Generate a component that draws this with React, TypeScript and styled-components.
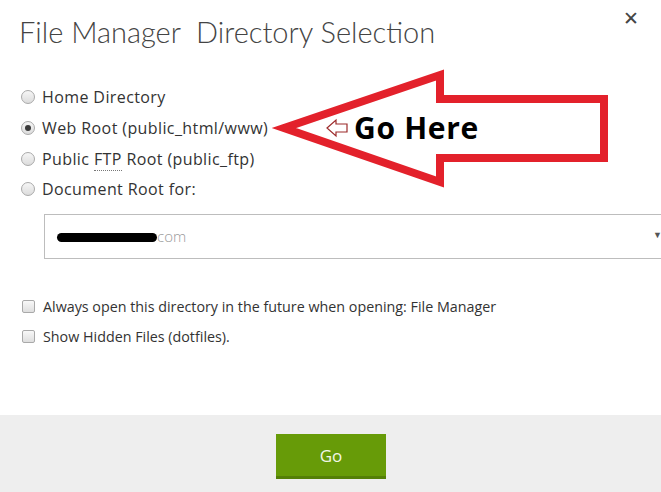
import React from "react";
import styled, { createGlobalStyle } from "styled-components";

const GlobalStyle = createGlobalStyle`
  html, body {
    margin: 0;
    padding: 0;
    background: #ffffff;
  }
  body {
    font-family: "Open Sans", "Noto Sans", sans-serif;
    color: #333333;
  }
`;

const Dialog = styled.div`
  position: relative;
  width: 661px;
  height: 492px;
  display: flex;
  flex-direction: column;
  overflow: hidden;
  background: #ffffff;
`;

const Header = styled.div`
  height: 64px;
  display: flex;
  justify-content: space-between;
  align-items: flex-start;
  padding: 0 22px 0 19px;
  box-sizing: border-box;
`;

const Title = styled.h1`
  margin: 12px 0 0;
  font-family: "Lato", "Open Sans", sans-serif;
  font-size: 29px;
  line-height: 40px;
  font-weight: 300;
  color: #444444;
  white-space: pre;
`;

const Close = styled.button`
  margin-top: 8px;
  border: 0;
  background: none;
  padding: 0;
  font-family: "DejaVu Sans", sans-serif;
  font-size: 19px;
  line-height: 20px;
  color: #444444;
  cursor: pointer;
`;

const Body = styled.div`
  flex: 1;
  padding-left: 21px;
  display: flex;
  flex-direction: column;
`;

const OptionList = styled.div<{ $top: number }>`
  margin-top: ${({ $top }) => $top}px;
  display: flex;
  flex-direction: column;
`;

const Row = styled.label`
  height: 30.7px;
  display: flex;
  align-items: center;
  gap: 7px;
  font-size: 16px;
  letter-spacing: 0.4px;
  color: #333333;
  white-space: nowrap;
`;

const SmallRow = styled(Row)`
  font-size: 14.3px;
  letter-spacing: 0;
  gap: 8px;
`;

const Radio = styled.span<{ $checked?: boolean }>`
  width: 14px;
  height: 14px;
  border-radius: 50%;
  box-sizing: border-box;
  border: 1px solid #a9a9a9;
  background: linear-gradient(#f6f6f6, #dcdcdc);
  display: inline-flex;
  align-items: center;
  justify-content: center;
  flex: none;

  &::after {
    content: "";
    width: 6px;
    height: 6px;
    border-radius: 50%;
    background: #3a3a3a;
    display: ${({ $checked }) => ($checked ? "block" : "none")};
  }
`;

const Box = styled.span`
  width: 13px;
  height: 13px;
  margin-left: 1px;
  border-radius: 2px;
  box-sizing: border-box;
  border: 1px solid #a9a9a9;
  background: linear-gradient(#f8f8f8, #dedede);
  flex: none;
`;

const Abbr = styled.abbr`
  text-decoration: none;
  border-bottom: 1px dotted #777777;
`;

const Select = styled.div`
  margin: 9px -14px 0 23px;
  height: 45px;
  box-sizing: border-box;
  border: 1px solid #bdbdbd;
  display: flex;
  align-items: center;
  justify-content: space-between;
  padding: 0 12px 0 12px;
`;

const Value = styled.span`
  display: flex;
  align-items: center;
  font-size: 15px;
  font-weight: 300;
  color: #9a9a9a;
`;

const Redaction = styled.span`
  display: inline-block;
  width: 100px;
  height: 9px;
  border-radius: 5px;
  background: #000000;
  margin-top: 2px;
`;

const Caret = styled.span`
  font-size: 9px;
  color: #555555;
  margin-top: -3px;
`;

const Footer = styled.div`
  height: 77px;
  background: #eeeeee;
  display: flex;
  justify-content: center;
  align-items: flex-start;
`;

const GoButton = styled.button`
  margin-top: 19px;
  margin-left: 1px;
  width: 110px;
  height: 45px;
  border: 0;
  border-bottom: 3px solid #547f07;
  background: #679b08;
  color: #f2f7e8;
  font-family: "Open Sans", sans-serif;
  font-size: 17px;
  cursor: pointer;
`;

const Overlay = styled.svg`
  position: absolute;
  left: 0;
  top: 0;
  pointer-events: none;
`;

const Callout = styled.span`
  position: absolute;
  left: 354px;
  top: 107px;
  font-family: "Open Sans", sans-serif;
  font-weight: 700;
  font-size: 30px;
  letter-spacing: 0.7px;
  color: #000000;
  pointer-events: none;
`;

const radios = [
  { label: "Home Directory" },
  { label: "Web Root (public_html/www)", checked: true },
  { label: "ftp" },
  { label: "Document Root for:" },
];

export default function App() {
  return (
    <>
      <GlobalStyle />
      <Dialog>
        <Header>
          <Title>{"File Manager  Directory Selection"}</Title>
          <Close aria-label="Close">✕</Close>
        </Header>
        <Body>
          <OptionList $top={18}>
            {radios.map((r) => (
              <Row key={r.label}>
                <Radio $checked={r.checked} />
                {r.label === "ftp" ? (
                  <span>
                    Public <Abbr title="File Transfer Protocol">FTP</Abbr> Root
                    (public_ftp)
                  </span>
                ) : (
                  r.label
                )}
              </Row>
            ))}
          </OptionList>
          <Select>
            <Value>
              <Redaction />
              com
            </Value>
            <Caret>▼</Caret>
          </Select>
          <OptionList $top={32}>
            <SmallRow>
              <Box />
              Always open this directory in the future when opening: File Manager
            </SmallRow>
            <SmallRow>
              <Box />
              Show Hidden Files (dotfiles).
            </SmallRow>
          </OptionList>
        </Body>
        <Footer>
          <GoButton>Go</GoButton>
        </Footer>
        <Overlay width="661" height="492" viewBox="0 0 661 492">
          <polygon
            points="284,128 440,75 440,99 604,99 604,158 440,158 440,182"
            fill="none"
            stroke="#e3212b"
            strokeWidth="8"
            strokeLinejoin="miter"
            strokeMiterlimit="12"
          />
          <polygon
            points="327,128 336,120 336,124 347,124 347,132 336,132 336,136"
            fill="#ffffff"
            stroke="#9c2a2a"
            strokeWidth="1.2"
          />
        </Overlay>
        <Callout>Go Here</Callout>
      </Dialog>
    </>
  );
}
